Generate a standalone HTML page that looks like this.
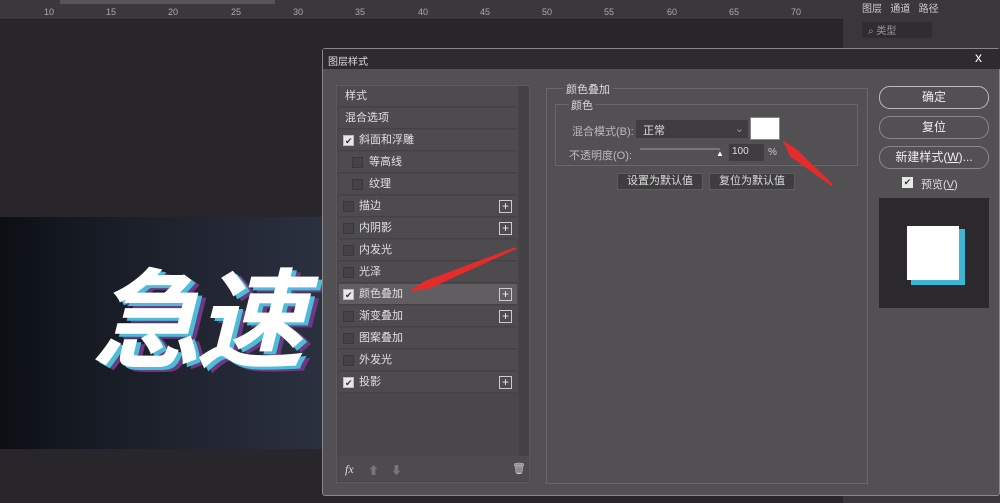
<!DOCTYPE html>
<html><head><meta charset="utf-8"><style>
*{margin:0;padding:0;box-sizing:border-box}
body{width:1000px;height:503px;overflow:hidden;background:#29262b;font-family:"Liberation Sans","Noto Sans CJK SC",sans-serif;font-size:11px;color:#ddd;position:relative}
.a{position:absolute}
.row{position:absolute;left:339px;width:178px;height:21px;border-bottom:1px solid #444144;background:#4e4b4f;line-height:21px;color:#e0e0e0}
.cb{position:absolute;top:5px;width:11px;height:11px;border:1px solid #3a373a;background:#454246}
.cb.on{background:#e8e8e8;border-color:#bbb}
.cb.on:after{content:"✔";position:absolute;left:1px;top:-5px;font-size:9px;color:#333}
.plus{position:absolute;right:5px;top:4px;width:13px;height:13px;border:1px solid #ccc;color:#eee;font-size:12px;line-height:10px;text-align:center}
.btn{position:absolute;left:879px;width:110px;height:23px;border:1px solid #8a878a;border-radius:11px;text-align:center;line-height:21px;color:#eee;font-size:12px}
</style></head><body>
<div class="a" style="left:0;top:0;width:843px;height:20px;background:#3b383c;border-bottom:1px solid #222"></div>
<div class="a" style="left:60px;top:0;width:215px;height:4px;background:#555"></div>
<div class="a" style="left:0;top:7px;width:843px;font-size:9px;color:#aaa">
<span class="a" style="left:44px">10</span><span class="a" style="left:106px">15</span><span class="a" style="left:168px">20</span><span class="a" style="left:231px">25</span><span class="a" style="left:293px">30</span><span class="a" style="left:355px">35</span><span class="a" style="left:418px">40</span><span class="a" style="left:480px">45</span><span class="a" style="left:542px">50</span><span class="a" style="left:604px">55</span><span class="a" style="left:667px">60</span><span class="a" style="left:729px">65</span><span class="a" style="left:791px">70</span></div>
<div class="a" style="left:843px;top:0;width:157px;height:503px;background:#3a373b"></div>
<div class="a" style="left:862px;top:0;font-size:10px;color:#ccc">图层 &nbsp; 通道 &nbsp; 路径</div>
<div class="a" style="left:862px;top:22px;width:70px;height:16px;background:#302d31;font-size:10px;color:#999;padding-left:6px">⌕ 类型</div>
<div class="a" style="left:0;top:217px;width:330px;height:232px;background:linear-gradient(90deg,#0c1015 0%,#1b1f29 40%,#2c3140 100%)"></div>
<div class="a" style="left:92px;top:268px;font-size:108px;font-weight:bold;font-style:italic;color:#fff;letter-spacing:-4px;line-height:1;text-shadow:4px 3px 0 #4dbcd8,8px 5px 0 #6b3a82">急速</div>
<div class="a" style="left:322px;top:48px;width:678px;height:448px;background:#535053;border:1px solid #8a878a;border-radius:3px"></div>
<div class="a" style="left:323px;top:49px;width:677px;height:20px;background:#2e2b2f"></div>
<div class="a" style="left:328px;top:53px;font-size:10px;color:#ddd">图层样式</div>
<div class="a" style="left:975px;top:49px;font-size:14px;color:#fff">x</div>
<div class="a" style="left:336px;top:85px;width:194px;height:398px;background:#4a474b;border:1px solid #5c595c"></div>
<div class="a" style="left:519px;top:86px;width:10px;height:370px;background:#444145"></div>
<div class="row" style="top:86px;padding-left:6px">样式</div>
<div class="row" style="top:108px;padding-left:6px">混合选项</div>
<div class="row" style="top:130px"><div class="cb on" style="left:4px"></div><span style="margin-left:20px">斜面和浮雕</span></div>
<div class="row" style="top:152px"><div class="cb" style="left:13px"></div><span style="margin-left:30px">等高线</span></div>
<div class="row" style="top:174px"><div class="cb" style="left:13px"></div><span style="margin-left:30px">纹理</span></div>
<div class="row" style="top:196px"><div class="cb" style="left:4px"></div><span style="margin-left:20px">描边</span><div class="plus">+</div></div>
<div class="row" style="top:218px"><div class="cb" style="left:4px"></div><span style="margin-left:20px">内阴影</span><div class="plus">+</div></div>
<div class="row" style="top:240px"><div class="cb" style="left:4px"></div><span style="margin-left:20px">内发光</span></div>
<div class="row" style="top:262px"><div class="cb" style="left:4px"></div><span style="margin-left:20px">光泽</span></div>
<div class="row" style="top:284px;background:#615e62"><div class="cb on" style="left:4px"></div><span style="margin-left:20px">颜色叠加</span><div class="plus">+</div></div>
<div class="row" style="top:306px"><div class="cb" style="left:4px"></div><span style="margin-left:20px">渐变叠加</span><div class="plus">+</div></div>
<div class="row" style="top:328px"><div class="cb" style="left:4px"></div><span style="margin-left:20px">图案叠加</span></div>
<div class="row" style="top:350px"><div class="cb" style="left:4px"></div><span style="margin-left:20px">外发光</span></div>
<div class="row" style="top:372px"><div class="cb on" style="left:4px"></div><span style="margin-left:20px">投影</span><div class="plus">+</div></div>
<div class="a" style="left:339px;top:456px;width:190px;height:25px;background:#4e4b4f"></div>
<div class="a" style="left:345px;top:462px;font-style:italic;font-family:'Liberation Serif',serif;font-size:12px;color:#ddd">fx</div>
<div class="a" style="left:368px;top:462px;color:#777">⬆</div><div class="a" style="left:391px;top:462px;color:#777">⬇</div>
<div class="a" style="left:512px;top:462px;color:#ccc">🗑</div>
<div class="a" style="left:546px;top:88px;width:322px;height:396px;border:1px solid #6a676a"></div>
<div class="a" style="left:563px;top:81px;background:#535053;padding:0 3px;color:#ddd">颜色叠加</div>
<div class="a" style="left:555px;top:104px;width:303px;height:62px;border:1px solid #6a676a"></div>
<div class="a" style="left:569px;top:97px;background:#535053;padding:0 2px;color:#ddd">颜色</div>
<div class="a" style="left:572px;top:123px;color:#bbb">混合模式(B):</div>
<div class="a" style="left:636px;top:120px;width:112px;height:18px;background:#403d41;color:#ddd;padding:2px 7px">正常<span style="position:absolute;right:4px;color:#999">⌄</span></div>
<div class="a" style="left:750px;top:117px;width:30px;height:23px;background:#fff;border:1px solid #888"></div>
<div class="a" style="left:569px;top:147px;color:#bbb">不透明度(O):</div>
<div class="a" style="left:640px;top:148px;width:80px;height:2px;background:#777"></div>
<div class="a" style="left:716px;top:149px;color:#fff;font-size:8px">▲</div>
<div class="a" style="left:729px;top:144px;width:35px;height:17px;background:#403d41;color:#ddd;padding:2px 3px;font-size:10px">100</div>
<div class="a" style="left:768px;top:147px;color:#ccc;font-size:10px">%</div>
<div class="a" style="left:617px;top:173px;width:86px;height:17px;background:#403d41;border:1px solid #5e5b5e;text-align:center;color:#ddd;line-height:15px">设置为默认值</div>
<div class="a" style="left:709px;top:173px;width:86px;height:17px;background:#403d41;border:1px solid #5e5b5e;text-align:center;color:#ddd;line-height:15px">复位为默认值</div>
<div class="btn" style="top:86px;border-color:#bbb">确定</div>
<div class="btn" style="top:116px">复位</div>
<div class="btn" style="top:146px">新建样式(<u>W</u>)...</div>
<div class="a" style="left:902px;top:177px;width:11px;height:11px;background:#e8e8e8;color:#333;font-size:9px;line-height:10px;text-align:center">✔</div>
<div class="a" style="left:921px;top:176px;color:#ddd">预览(<u>V</u>)</div>
<div class="a" style="left:879px;top:198px;width:110px;height:110px;background:#2c292d"></div>
<div class="a" style="left:911px;top:229px;width:54px;height:56px;background:#3fb5d6"></div>
<div class="a" style="left:907px;top:226px;width:52px;height:54px;background:#fff"></div>
<svg class="a" style="left:0;top:0" width="1000" height="503"><g fill="#e52b2b" stroke="#e52b2b">
<path d="M516 248 L425 282 L412 290 L428 288 Z" stroke-width="2"/>
<path d="M832 185 L796 150 L785 143 L791 156 Z" stroke-width="2"/></g></svg>
</body></html>
